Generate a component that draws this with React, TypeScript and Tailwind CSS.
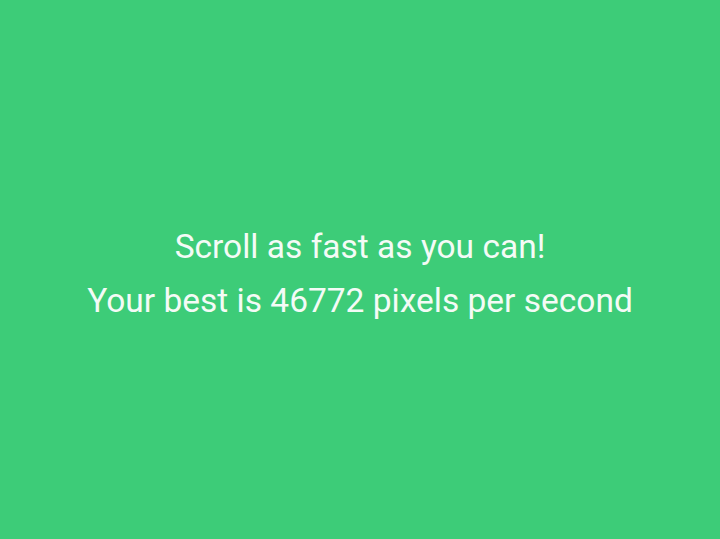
export default function App() {
  return (
    <div className="flex h-[539px] w-[720px] flex-col items-center justify-center bg-[#3dcc78] text-[#f4fbf6]" style={{ fontFamily: "Roboto, sans-serif" }}>
      <div className="pt-[8px] text-center text-[33.5px] leading-[54px]">
        <p>Scroll as fast as you can!</p>
        <p>Your best is 46772 pixels per second</p>
      </div>
    </div>
  );
}
